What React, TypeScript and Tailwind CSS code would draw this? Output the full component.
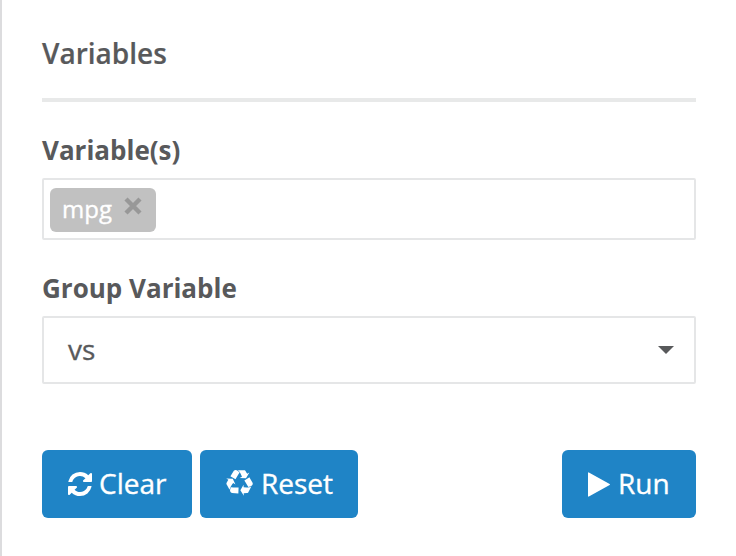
import type { ReactNode } from "react";

const REFRESH =
  "M1639 1056q0 5-1 7-64 268-268 434.5t-478 166.5q-146 0-282.5-55t-243.5-157l-129 129q-19 19-45 19t-45-19-19-45v-448q0-26 19-45t45-19h448q26 0 45 19t19 45-19 45l-137 137q71 66 161 102t187 36q134 0 250-65t186-179q11-17 53-117 8-23 30-23h192q13 0 22.5 9.5t9.5 22.5zm25-800v448q0 26-19 45t-45 19h-448q-26 0-45-19t-19-45 19-45l138-138q-148-137-349-137-134 0-250 65t-186 179q-11 17-53 117-8 23-30 23h-199q-13 0-22.5-9.5t-9.5-22.5v-7q65-268 270-434.5t480-166.5q146 0 284 55.5t245 156.5l130-129q19-19 45-19t45 19 19 45z";
const RECYCLE =
  "M836 1169l-15 368-2 22-420-29q-36-3-67-31.5t-47-65.5q-11-27-14.5-55t4-65 12-55 21.5-64 19-53q78 12 509 28zm-387-586l180 379-147-92q-63 72-111.5 144.5t-72.5 125-39.5 94.5-18.5 63l-4 21-190-357q-17-26-18-56t6-47l8-18q35-63 114-188l-140-86zm1231 517l-188 359q-12 29-36.5 46.5t-43.5 20.5l-18 4q-71 7-219 12l8 164-230-367 211-362 7 173q170 16 283 5t170-33zm-785-924q-47 63-265 435l-317-187-19-12 225-356q20-31 60-45t80-10q24 2 48.5 12t42 21 41.5 33 36 34.5 36 39.5 32 35zm655 307l212 363q18 37 12.5 76t-27.5 74q-13 20-33 37t-38 28-48.5 22-47 16-51.5 14-46 12q-34-72-265-436l313-195zm-143-226l142-83-220 373-419-20 151-86q-34-89-75-166t-75.5-123.5-64.5-80-47-46.5l-17-13 405 1q31-3 58 10.5t39 28.5l11 15q39 61 112 190z";
const PLAY =
  "M1576 927l-1328 738q-23 13-39.5 3t-16.5-36v-1472q0-26 16.5-36t39.5 3l1328 738q23 13 23 31t-23 31z";

function Icon({ d, viewBox, className }: { d: string; viewBox: string; className: string }) {
  return (
    <svg viewBox={viewBox} className={`shrink-0 fill-current ${className}`} aria-hidden="true">
      <path d={d} />
    </svg>
  );
}

function Button({ className, children }: { className: string; children: ReactNode }) {
  return (
    <button
      className={`flex h-[68px] items-center rounded-[6px] bg-[#1f84c6] pb-0.5 pl-[26px] text-[28px] text-white [-webkit-text-stroke:0.35px] ${className}`}
    >
      {children}
    </button>
  );
}

export default function App() {
  return (
    <div className="h-[556px] w-[736px] overflow-hidden border-l-2 border-[#dcdcde] bg-white px-10 pt-[33px] font-['Open_Sans',sans-serif] text-[#58595b]">
      <h2 className="h-[65px] text-[28px] leading-10 font-semibold [-webkit-text-stroke:0.2px]">Variables</h2>
      <div className="h-1 w-[654px] bg-[#e8e9e9]" />
      <label className="mt-[28px] block h-12 text-[26px] leading-10 font-bold">Variable(s)</label>
      <div className="flex h-[62px] w-[654px] items-center rounded-[2px] border-2 border-[#e5e6e7] px-1.5 pt-0.5">
        <span className="flex h-11 w-[106px] items-center rounded-[6px] bg-[#c1c1c1] pl-3 text-[24px] text-white [-webkit-text-stroke:0.35px]">
          <span className="pb-0.5">mpg</span>
          <svg viewBox="0 0 18 18" className="mb-2 ml-[12px] size-[18px] shrink-0" aria-hidden="true">
            <path d="M2 2L16 16M16 2L2 16" stroke="#989898" strokeWidth="4.4" />
          </svg>
        </span>
      </div>
      <label className="mt-[28px] block h-12 text-[26px] leading-10 font-bold">Group Variable</label>
      <div className="flex h-[68px] w-[654px] items-center justify-between rounded-[2px] border-2 border-[#e5e6e7] pr-5 pl-6 text-[28px] [-webkit-text-stroke:0.3px]">
        <span className="pb-0.5">vs</span>
        <svg viewBox="0 0 16 8" className="h-2 w-4 fill-current" aria-hidden="true">
          <path d="M0 0H16L8 8Z" />
        </svg>
      </div>
      <div className="mt-[66px] flex w-[654px] gap-2">
        <Button className="w-[150px] gap-[7px]"><Icon d={REFRESH} viewBox="128 128 1536 1536" className="mt-0.5 size-6" />Clear</Button>
        <Button className="w-[158px] gap-2"><Icon d={RECYCLE} viewBox="0 0 1792 1792" className="size-[27px]" />Reset</Button>
        <Button className="ml-auto w-[134px] gap-2"><Icon d={PLAY} viewBox="192 100 1408 1592" className="mt-0.5 h-[25px] w-[22px]" />Run</Button>
      </div>
    </div>
  );
}
